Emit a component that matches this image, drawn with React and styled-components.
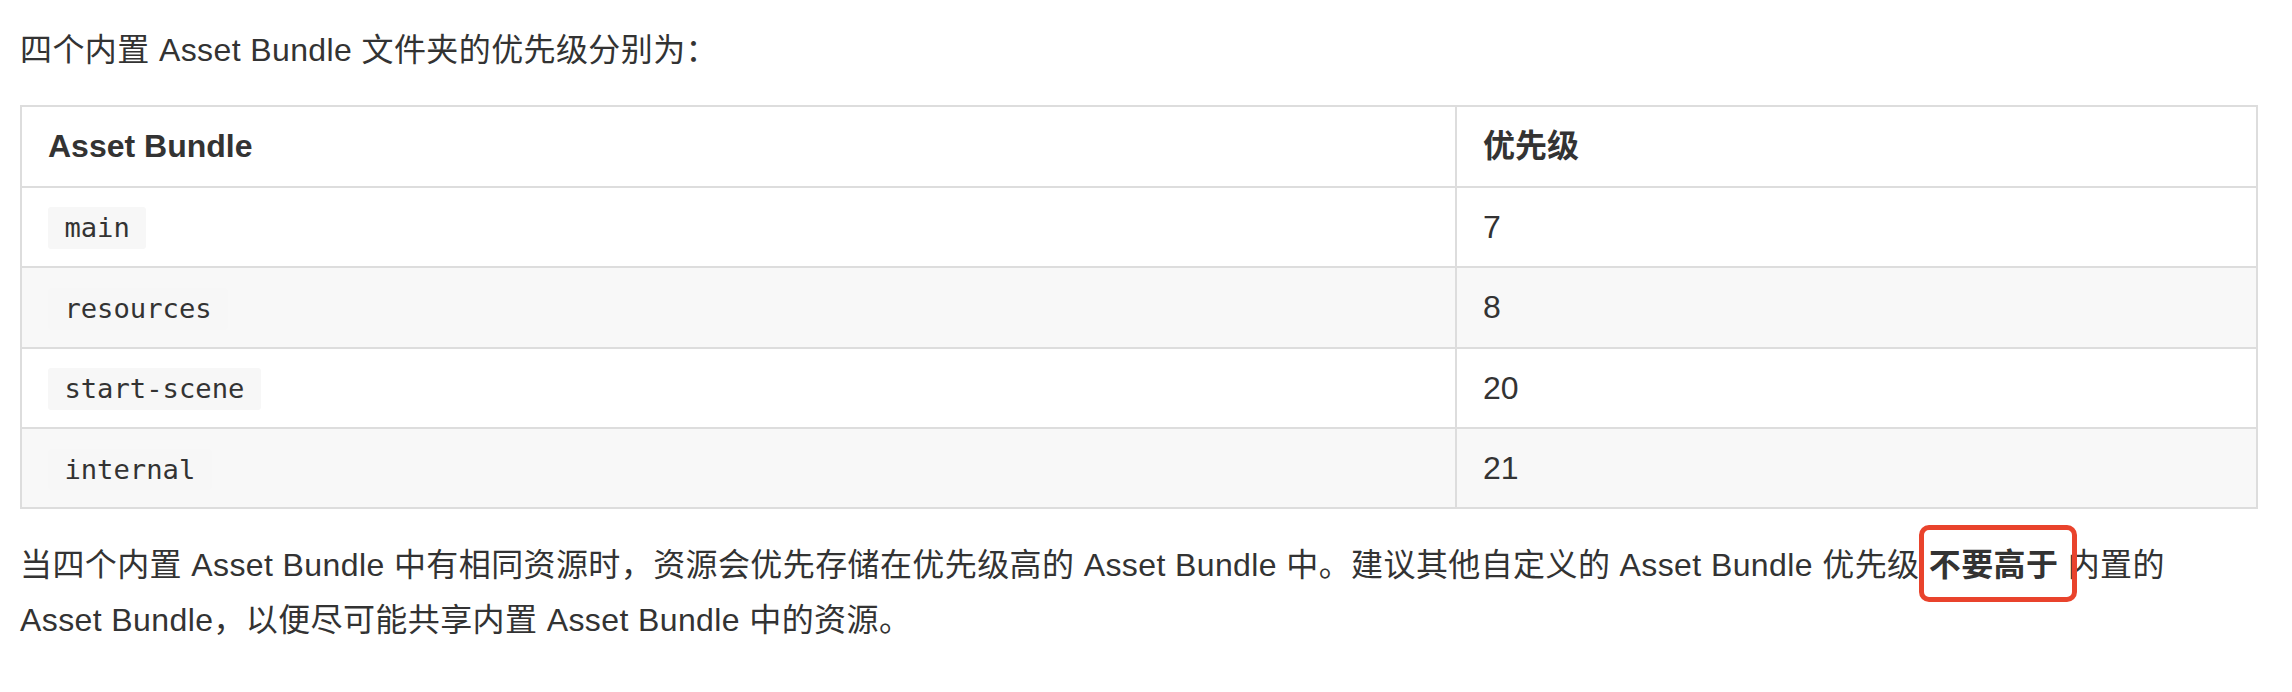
import React from "react";
import styled, { createGlobalStyle } from "styled-components";

const GlobalStyle = createGlobalStyle`
  html, body {
    margin: 0;
    background: #fff;
  }
`;

const Page = styled.div`
  box-sizing: border-box;
  width: 2292px;
  padding: 23px 36px 0 20px;
  font-family: "Liberation Sans", "Noto Sans CJK SC", sans-serif;
  font-size: 32px;
  line-height: 1.7;
  letter-spacing: 0.4px;
  color: #333;
`;

const Paragraph = styled.p`
  margin: 0 0 ${(p) => p.$gap || 0}px;
`;

const Table = styled.table`
  width: 2236px;
  border-collapse: collapse;
  border-spacing: 0;
  table-layout: fixed;
  margin-bottom: 29px;
  letter-spacing: 0;

  tbody tr:nth-child(2n) {
    background: #f8f8f8;
  }
`;

const Col = styled.col`
  width: ${(p) => p.$w};
`;

const Th = styled.th`
  padding: 12px 26px;
  border: 2px solid #ddd;
  text-align: left;
  font-weight: bold;
`;

const Td = styled.td`
  padding: 12px 26px;
  border: 2px solid #ddd;
`;

const Code = styled.code`
  font-family: "DejaVu Sans Mono", "Liberation Mono", monospace;
  font-size: 85%;
  padding: 0.2em 0;
  background: #f7f7f7;
  border-radius: 3px;

  &::before,
  &::after {
    content: "\\00a0";
  }
`;

const Mark = styled.strong`
  position: relative;
  display: inline-block;
  font-weight: bold;

  &::after {
    content: "";
    position: absolute;
    top: -13px;
    bottom: -9px;
    left: -10px;
    right: -19px;
    border: 5px solid #e9432c;
    border-radius: 10px;
  }
`;

const bundles = [
  { name: "main", priority: 7 },
  { name: "resources", priority: 8 },
  { name: "start-scene", priority: 20 },
  { name: "internal", priority: 21 },
];

export default function App() {
  return (
    <>
      <GlobalStyle />
      <Page>
        <Paragraph $gap={28}>四个内置 Asset Bundle 文件夹的优先级分别为：</Paragraph>

        <Table>
          <colgroup>
            <Col $w="1435px" />
            <Col $w="801px" />
          </colgroup>
          <thead>
            <tr>
              <Th>Asset Bundle</Th>
              <Th>优先级</Th>
            </tr>
          </thead>
          <tbody>
            {bundles.map((b) => (
              <tr key={b.name}>
                <Td>
                  <Code>{b.name}</Code>
                </Td>
                <Td>{b.priority}</Td>
              </tr>
            ))}
          </tbody>
        </Table>

        <Paragraph>
          当四个内置 Asset Bundle 中有相同资源时，资源会优先存储在优先级高的 Asset Bundle 中。建议其他自定义的 Asset Bundle 优先级 <Mark>不要高于</Mark> 内置的
          <br />
          Asset Bundle，以便尽可能共享内置 Asset Bundle 中的资源。
        </Paragraph>
      </Page>
    </>
  );
}
